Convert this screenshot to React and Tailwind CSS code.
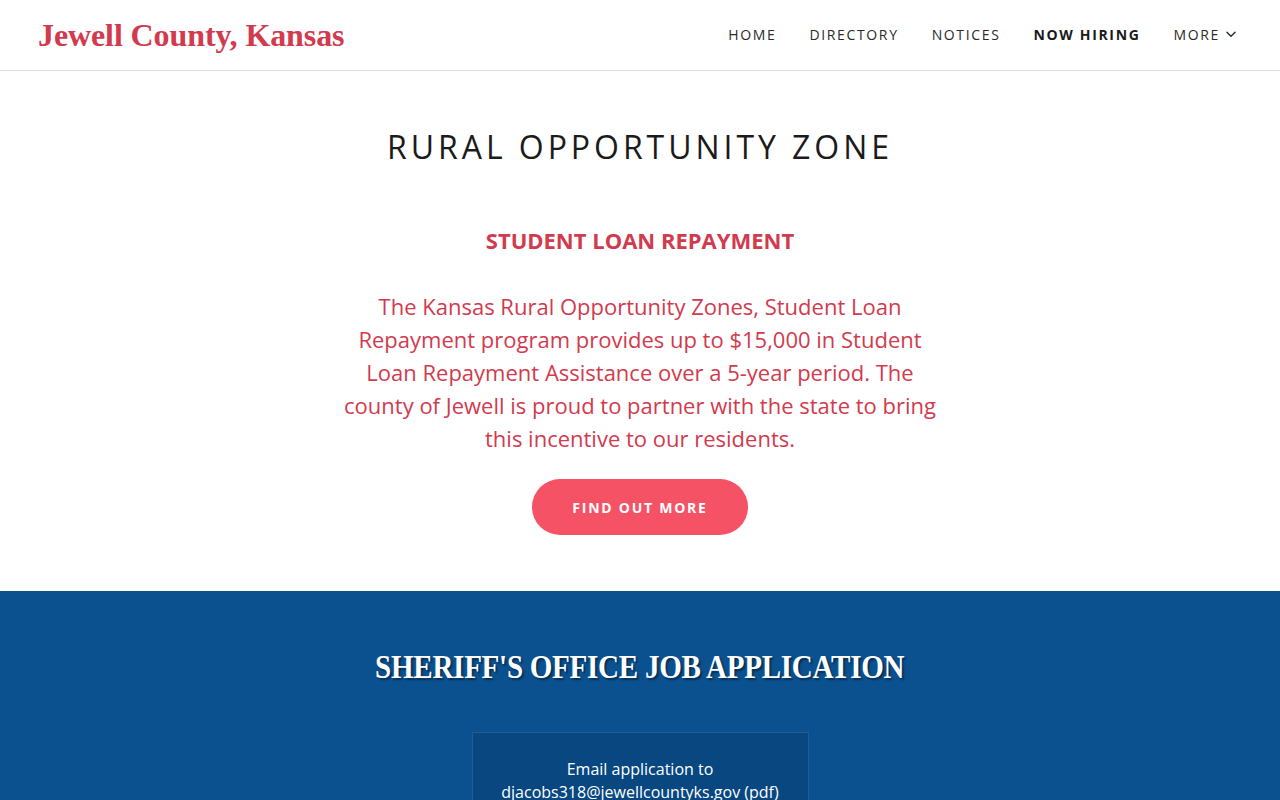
import React from "react";

export default function App() {
  const sans = { fontFamily: '"Open Sans", "Noto Sans", sans-serif' };
  return (
    <div className="w-[1280px] h-[800px] overflow-hidden bg-white" style={sans}>
      <header className="h-[71px] border-b border-[#e2e2e2] flex items-center justify-between pl-[38px] pr-[42px]">
        <div
          className="text-[32px] font-bold text-[#d23a4e] leading-none tracking-[-0.1px] mb-[1px]"
          style={{ fontFamily: '"Liberation Serif", "DejaVu Serif", serif' }}
        >
          Jewell County, Kansas
        </div>
        <nav className="flex items-center gap-[33px] text-[14px] tracking-[1.65px] text-[#2a2a2a] mb-[2px]">
          <span>HOME</span>
          <span>DIRECTORY</span>
          <span>NOTICES</span>
          <span className="font-bold text-[#1a1a1a]">NOW HIRING</span>
          <span className="flex items-center gap-[4px]">
            MORE
            <svg width="14" height="14" viewBox="0 0 24 24" fill="none" stroke="currentColor" strokeWidth="2.4" strokeLinecap="round" strokeLinejoin="round">
              <path d="M5 9l7 7 7-7" />
            </svg>
          </span>
        </nav>
      </header>

      <section className="flex flex-col items-center pt-[54px] h-[520px]">
        <h1 className="text-[32px] tracking-[3.95px] text-[#1b1b1b] font-normal leading-[44px]">
          RURAL OPPORTUNITY ZONE
        </h1>
        <h2 className="mt-[55px] text-[22px] font-bold text-[#d23a4e] leading-[32px]">
          STUDENT LOAN REPAYMENT
        </h2>
        <p className="mt-[34px] w-[600px] text-center text-[22px] leading-[33px] text-[#d23a4e]">
          The Kansas Rural Opportunity Zones, Student Loan Repayment program provides up to $15,000 in Student Loan Repayment Assistance over a 5-year period. The county of Jewell is proud to partner with the state to bring this incentive to our residents.
        </p>
        <button className="mt-[24px] w-[216px] h-[56px] rounded-full bg-[#f55266] text-white text-[14px] font-bold tracking-[1.75px]">
          FIND OUT MORE
        </button>
      </section>

      <section className="bg-[#0b5190] h-[209px] flex flex-col items-center pt-[53px]">
        <h2
          className="text-[33px] font-bold text-white leading-[46px] tracking-[-0.3px] scale-x-[0.88]"
          style={{ fontFamily: '"Liberation Serif", "DejaVu Serif", serif', textShadow: "2px 2px 2px rgba(0,0,0,0.45)" }}
        >
          SHERIFF'S OFFICE JOB APPLICATION
        </h2>
        <div className="mt-[42px] w-[337px] bg-[#08477f] border border-[#1a5d99] pt-[25px] pb-[20px] text-center text-white text-[16px] leading-[23px]">
          <div>Email application to</div>
          <div>djacobs318@jewellcountyks.gov (pdf)</div>
        </div>
      </section>
    </div>
  );
}
